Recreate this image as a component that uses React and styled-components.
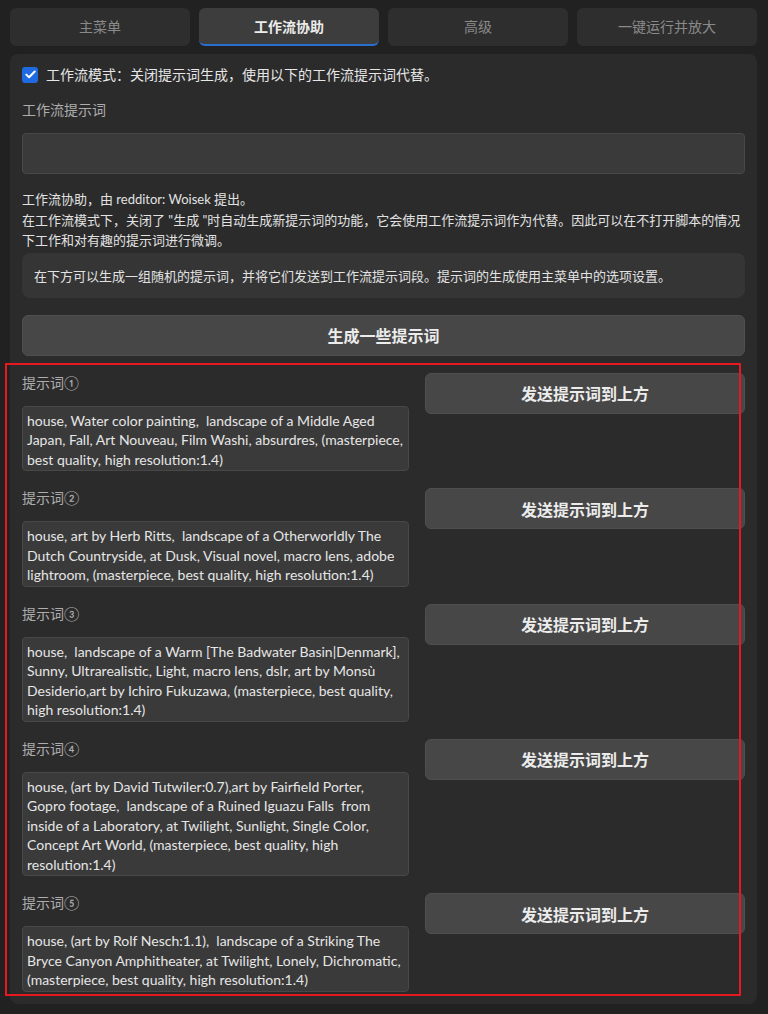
import React from "react";
import styled, { createGlobalStyle } from "styled-components";

const GlobalStyle = createGlobalStyle`
  html, body {
    margin: 0;
    padding: 0;
    background: #212121;
  }
  body {
    font-family: "Lato", "Noto Sans CJK SC", sans-serif;
    font-size: 14px;
    color: #e2e2e2;
  }
  * { box-sizing: border-box; }
`;

const Page = styled.div`
  position: relative;
  width: 768px;
  height: 1014px;
  padding: 8px 11px 0 10px;
  background: #212121;
`;

const TabBar = styled.div`
  display: grid;
  grid-template-columns: repeat(4, 1fr);
  gap: 9px;
  height: 38px;
`;

const Tab = styled.button`
  display: flex;
  align-items: center;
  justify-content: center;
  border: none;
  border-radius: 6px;
  border-bottom: 2px solid ${(p) => (p.$active ? "#2a6fcf" : "transparent")};
  background: ${(p) => (p.$active ? "#3d3d3d" : "#2e2e2e")};
  color: ${(p) => (p.$active ? "#ececec" : "#8a8a8a")};
  font-family: "Lato", "Noto Sans CJK SC", sans-serif;
  font-size: 14px;
  font-weight: ${(p) => (p.$active ? 700 : 400)};
  padding: 0;
`;

const Panel = styled.div`
  margin-top: 8px;
  background: #2b2b2b;
  border-radius: 8px;
  padding: 12px;
  display: flex;
  flex-direction: column;
`;

const CheckRow = styled.label`
  display: flex;
  align-items: center;
  gap: 8px;
  height: 18px;
  color: #e6e6e6;
  line-height: 18px;
`;

const CheckBox = styled.span`
  width: 16px;
  height: 16px;
  border-radius: 3px;
  background: #1f6ae0;
  display: flex;
  align-items: center;
  justify-content: center;
  flex: none;
  margin-top: -1px;
`;

const FieldLabel = styled.div`
  color: #adadad;
  line-height: 20px;
  margin-top: ${(p) => p.$top || 0}px;
`;

const Input = styled.div`
  margin-top: 13px;
  height: 41px;
  background: #3a3a3a;
  border: 1px solid #484848;
  border-radius: 4px;
`;

const Paragraph = styled.div`
  margin-top: 15px;
  font-size: 13px;
  line-height: 20.5px;
  color: #e2e2e2;
  white-space: nowrap;
`;

const InfoBox = styled.div`
  margin-top: 2px;
  height: 45px;
  background: #353535;
  border-radius: 8px;
  padding: 0 12px;
  display: flex;
  align-items: center;
  font-size: 13px;
  color: #e2e2e2;
`;

const BigButton = styled.button`
  height: 41px;
  width: 100%;
  background: #474747;
  border: 1px solid #4f4f4f;
  border-radius: 6px;
  color: #ececec;
  font-family: "Lato", "Noto Sans CJK SC", sans-serif;
  font-size: 16px;
  font-weight: 700;
  padding: 0;
`;

const GenerateButton = styled(BigButton)`
  margin-top: 17px;
`;

const Rows = styled.div`
  margin-top: 17px;
  display: flex;
  flex-direction: column;
  gap: 17px;
`;

const PromptRow = styled.div`
  display: grid;
  grid-template-columns: 387px 1fr;
  gap: 16px;
  align-items: start;
`;

const PromptColumn = styled.div`
  display: flex;
  flex-direction: column;
`;

const PromptLabel = styled.div`
  color: #adadad;
  line-height: 20px;
  margin-bottom: 13px;
`;

const PromptBox = styled.div`
  background: #3a3a3a;
  border: 1px solid #484848;
  border-radius: 4px;
  padding: 4px 4px 1px;
  color: #e6e6e6;
  overflow: hidden;
`;

const PromptLine = styled.span`
  display: block;
  height: 19.5px;
  line-height: 19.5px;
  white-space: pre;
`;

const RedFrame = styled.div`
  position: absolute;
  left: 5px;
  top: 363px;
  width: 736px;
  height: 633px;
  border: 2px solid #e5191f;
  pointer-events: none;
`;

const tabs = ["主菜单", "工作流协助", "高级", "一键运行并放大"];

const prompts = [
  [
    "house, Water color painting,  landscape of a Middle Aged",
    "Japan, Fall, Art Nouveau, Film Washi, absurdres, (masterpiece,",
    "best quality, high resolution:1.4)",
  ],
  [
    "house, art by Herb Ritts,  landscape of a Otherworldly The",
    "Dutch Countryside, at Dusk, Visual novel, macro lens, adobe",
    "lightroom, (masterpiece, best quality, high resolution:1.4)",
  ],
  [
    "house,  landscape of a Warm [The Badwater Basin|Denmark],",
    "Sunny, Ultrarealistic, Light, macro lens, dslr, art by Monsù",
    "Desiderio,art by Ichiro Fukuzawa, (masterpiece, best quality,",
    "high resolution:1.4)",
  ],
  [
    "house, (art by David Tutwiler:0.7),art by Fairfield Porter,",
    "Gopro footage,  landscape of a Ruined Iguazu Falls  from",
    "inside of a Laboratory, at Twilight, Sunlight, Single Color,",
    "Concept Art World, (masterpiece, best quality, high",
    "resolution:1.4)",
  ],
  [
    "house, (art by Rolf Nesch:1.1),  landscape of a Striking The",
    "Bryce Canyon Amphitheater, at Twilight, Lonely, Dichromatic,",
    "(masterpiece, best quality, high resolution:1.4)",
  ],
];

const marks = ["①", "②", "③", "④", "⑤"];

export default function App() {
  return (
    <>
      <GlobalStyle />
      <Page>
        <TabBar>
          {tabs.map((t, i) => (
            <Tab key={t} $active={i === 1}>
              {t}
            </Tab>
          ))}
        </TabBar>
        <Panel>
          <CheckRow>
            <CheckBox>
              <svg width="11" height="9" viewBox="0 0 11 9">
                <path
                  d="M1.3 4.6 L4.1 7.3 L9.7 1.5"
                  fill="none"
                  stroke="#fff"
                  strokeWidth="2"
                  strokeLinecap="round"
                  strokeLinejoin="round"
                />
              </svg>
            </CheckBox>
            工作流模式：关闭提示词生成，使用以下的工作流提示词代替。
          </CheckRow>
          <FieldLabel $top={16}>工作流提示词</FieldLabel>
          <Input />
          <Paragraph>
            工作流协助，由 redditor: Woisek 提出。
            <br />
            在工作流模式下，关闭了 "生成 "时自动生成新提示词的功能，它会使用工作流提示词作为代替。因此可以在不打开脚本的情况
            <br />
            下工作和对有趣的提示词进行微调。
          </Paragraph>
          <InfoBox>
            在下方可以生成一组随机的提示词，并将它们发送到工作流提示词段。提示词的生成使用主菜单中的选项设置。
          </InfoBox>
          <GenerateButton>生成一些提示词</GenerateButton>
          <Rows>
            {prompts.map((lines, i) => (
              <PromptRow key={i}>
                <PromptColumn>
                  <PromptLabel>提示词{marks[i]}</PromptLabel>
                  <PromptBox>
                    {lines.map((l, j) => (
                      <PromptLine key={j}>{l}</PromptLine>
                    ))}
                  </PromptBox>
                </PromptColumn>
                <BigButton>发送提示词到上方</BigButton>
              </PromptRow>
            ))}
          </Rows>
        </Panel>
        <RedFrame />
      </Page>
    </>
  );
}
